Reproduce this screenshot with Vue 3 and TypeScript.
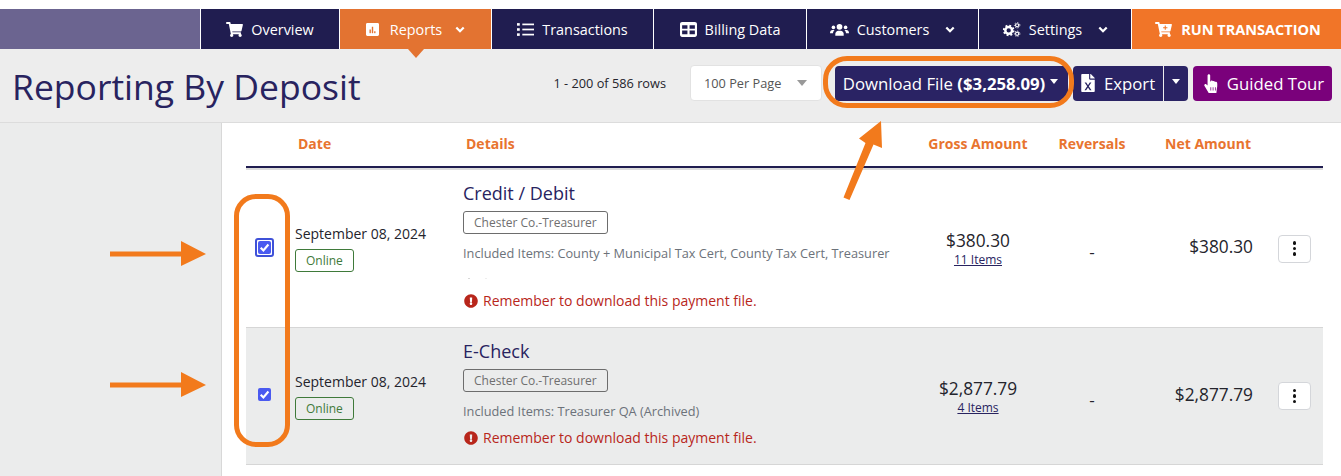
<script setup lang="ts">
interface NavItem {
  label: string
  icon: string
  width: number
  caret?: boolean
  kind?: string
}

interface PaymentRow {
  title: string
  tag: string
  included: string
  gross: string
  items: string
  net: string
  boxed: boolean
  specks: boolean
}

const navItems: NavItem[] = [
  { label: 'Overview', icon: 'cart', width: 138 },
  { label: 'Reports', icon: 'chart', width: 151, caret: true, kind: 'active' },
  { label: 'Transactions', icon: 'list', width: 161 },
  { label: 'Billing Data', icon: 'table', width: 152 },
  { label: 'Customers', icon: 'users', width: 171, caret: true },
  { label: 'Settings', icon: 'cogs', width: 152, caret: true },
  { label: 'RUN TRANSACTION', icon: 'cartplus', width: 209, kind: 'run' },
]

const rows: PaymentRow[] = [
  {
    title: 'Credit / Debit',
    tag: 'Chester Co.-Treasurer',
    included: 'Included Items: County + Municipal Tax Cert, County Tax Cert, Treasurer',
    gross: '$380.30',
    items: '11 Items',
    net: '$380.30',
    boxed: true,
    specks: true,
  },
  {
    title: 'E-Check',
    tag: 'Chester Co.-Treasurer',
    included: 'Included Items: Treasurer QA (Archived)',
    gross: '$2,877.79',
    items: '4 Items',
    net: '$2,877.79',
    boxed: false,
    specks: false,
  },
]

const cartPath =
  'M528.12 301.319l47.273-208C578.806 78.301 567.391 64 551.99 64H159.208l-9.166-44.81C147.758 8.021 137.93 0 126.529 0H24C10.745 0 0 10.745 0 24v16c0 13.255 10.745 24 24 24h69.883l70.248 343.435C147.325 417.1 136 435.222 136 456c0 30.928 25.072 56 56 56s56-25.072 56-56c0-15.674-6.447-29.835-16.824-40h209.647C430.447 426.165 424 440.326 424 456c0 30.928 25.072 56 56 56s56-25.072 56-56c0-22.172-12.888-41.332-31.579-50.405l5.517-24.276c3.413-15.018-8.002-29.319-23.403-29.319H218.117l-6.545-32h293.145c11.206 0 20.92-7.754 23.403-18.681z'
const alertPath =
  'M504 256c0 136.997-111.043 248-248 248S8 392.997 8 256C8 119.083 119.043 8 256 8s248 111.083 248 248zm-248 50c-25.405 0-46 20.595-46 46s20.595 46 46 46 46-20.595 46-46-20.595-46-46-46zm-43.673-165.346l7.418 136c.347 6.364 5.609 11.346 11.982 11.346h48.546c6.373 0 11.635-4.982 11.982-11.346l7.418-136c.375-6.874-5.098-12.654-11.982-12.654h-63.383c-6.884 0-12.356 5.78-11.981 12.654z'
</script>

<template>
  <div class="page">
    <nav class="nav">
      <div class="nav-blank"></div>
      <a
        v-for="item in navItems"
        :key="item.label"
        class="nav-item"
        :class="item.kind"
        :style="{ width: `${item.width}px` }"
      >
        <svg v-if="item.icon === 'cart'" class="nav-icon" viewBox="0 0 576 512" fill="currentColor">
          <path :d="cartPath" />
        </svg>
        <svg v-else-if="item.icon === 'cartplus'" class="nav-icon" viewBox="0 0 576 512" fill="currentColor">
          <path :d="cartPath" />
          <path d="M330 120h36v56h56v36h-56v56h-36v-56h-56v-36h56z" fill="#f17528" />
        </svg>
        <svg v-else-if="item.icon === 'chart'" class="nav-icon small" viewBox="0 0 448 512" fill="currentColor">
          <path
            fill-rule="evenodd"
            d="M48 32h352c26 0 48 22 48 48v352c0 26-22 48-48 48H48c-26 0-48-22-48-48V80c0-26 22-48 48-48zm84 224c-7 0-12 5-12 12v104c0 7 5 12 12 12h24c7 0 12-5 12-12V268c0-7-5-12-12-12zm80-96c-7 0-12 5-12 12v200c0 7 5 12 12 12h24c7 0 12-5 12-12V172c0-7-5-12-12-12zm80 160c-7 0-12 5-12 12v40c0 7 5 12 12 12h24c7 0 12-5 12-12v-40c0-7-5-12-12-12z"
          />
        </svg>
        <svg v-else-if="item.icon === 'list'" class="nav-icon" viewBox="0 0 16 14" fill="currentColor">
          <rect x="0" y="1" width="2.6" height="2.4" />
          <rect x="0" y="5.8" width="2.6" height="2.4" />
          <rect x="0" y="10.6" width="2.6" height="2.4" />
          <rect x="5" y="1.4" width="11" height="1.6" />
          <rect x="5" y="6.2" width="11" height="1.6" />
          <rect x="5" y="11" width="11" height="1.6" />
        </svg>
        <svg v-else-if="item.icon === 'table'" class="nav-icon" viewBox="0 0 16 14" fill="currentColor">
          <path
            fill-rule="evenodd"
            d="M2 0h12c1.100 0 2 .9 2 2v10c0 1.100-.9 2-2 2H2c-1.100 0-2-.9-2-2V2C0 .9.900 0 2 0zm0 3v3.400h5V3zm7 0v3.400h5V3zM2 8v3.500h5V8zm7 0v3.500h5V8z"
          />
        </svg>
        <svg v-else-if="item.icon === 'users'" class="nav-icon wide" viewBox="0 0 20 14" fill="currentColor">
          <circle cx="10" cy="4.2" r="3" />
          <path d="M5.6 13.6v-2c0-2 1.600-3.400 3-3.400h2.800c1.400 0 3 1.400 3 3.400v2z" />
          <circle cx="3.6" cy="4.8" r="1.9" />
          <circle cx="16.4" cy="4.8" r="1.9" />
          <path d="M0 10.800c0-2 1.200-3.200 2.600-3.200h2.200c-1 .8-1.600 2-1.600 3.400H0zM20 10.800c0-2-1.200-3.200-2.600-3.200h-2.200c1 .8 1.600 2 1.600 3.400H20z" />
        </svg>
        <svg v-else-if="item.icon === 'cogs'" class="nav-icon wide" viewBox="0 0 20 16" fill="none" stroke="currentColor">
          <circle cx="7" cy="9" r="3.6" stroke-width="2.6" />
          <circle cx="7" cy="9" r="5.2" stroke-width="2" stroke-dasharray="2 2.080" />
          <circle cx="16" cy="3.500" r="1.700" stroke-width="1.200" />
          <circle cx="16" cy="12.500" r="1.700" stroke-width="1.200" />
          <circle cx="16" cy="3.500" r="2.900" stroke-width="1" stroke-dasharray="1.200 1.500" />
          <circle cx="16" cy="12.500" r="2.900" stroke-width="1" stroke-dasharray="1.200 1.500" />
        </svg>
        <span>{{ item.label }}</span>
        <svg v-if="item.caret" class="chevron" viewBox="0 0 10 7" fill="none" stroke="currentColor">
          <path d="M1.300 1.500 5 5.200l3.700-3.700" stroke-width="2.200" />
        </svg>
        <i v-if="item.kind === 'active'" class="nav-pointer"></i>
      </a>
    </nav>

    <header class="toolbar">
      <h1 class="title">Reporting By Deposit</h1>
      <div class="actions">
        <span class="row-count">1 - 200 of 586 rows</span>
        <div class="per-page">
          <span>100 Per Page</span>
          <i class="select-caret"></i>
        </div>
        <button class="btn download">
          Download File&nbsp;<b>($3,258.09)</b><i class="caret"></i>
        </button>
        <div class="export-group">
          <button class="btn export">
            <svg class="xls" viewBox="0 0 384 512">
              <path
                fill="#fff"
                d="M224 0H24C11 0 0 11 0 24v464c0 13 11 24 24 24h336c13 0 24-11 24-24V160H248c-13 0-24-11-24-24zM384 122v6H256V0h6c6 0 12 3 17 7l98 98c4 5 7 11 7 17z"
              />
              <path fill="#24205f" d="M96 240h46l50 78 50-78h46l-73 110 76 114h-46l-53-82-53 82H93l76-114z" />
            </svg>
            Export
          </button>
          <button class="btn export-caret"><i class="caret"></i></button>
        </div>
        <button class="btn tour">
          <svg class="hand" viewBox="0 0 16 20" fill="#fff">
            <path
              d="M3.800 1.500C3.800.7 4.400 0 5.200 0s1.400.7 1.400 1.500v6.300l.9-.1V7c.8-.5 1.800-.2 2.100.6.800-.5 1.800-.2 2.100.7.900-.4 2-.1 2.300 1 .3 1.700.2 4.300-.3 6.200l-.5 4.500H5L.6 12.700c-.9-1.100.5-2.900 2-1.700l1.200 1z"
            />
            <path d="M7.200 14v3.500M9.700 14v3.500M12.200 14v3.500" stroke="#7a017b" stroke-width=".8" fill="none" />
          </svg>
          Guided Tour
        </button>
      </div>
    </header>

    <div class="body">
      <aside class="sidebar"></aside>
      <main class="content">
        <div class="table-head">
          <span></span>
          <span class="head-date">Date</span>
          <span class="head-details">Details</span>
          <span class="center">Gross Amount</span>
          <span class="center">Reversals</span>
          <span class="head-net">Net Amount</span>
        </div>

        <div v-for="(row, index) in rows" :key="row.title" class="table-row" :class="{ shaded: index === 1 }">
          <div class="check-cell">
            <span class="check-wrap" :class="{ boxed: row.boxed }">
              <span class="checkbox">
                <svg viewBox="0 0 12 12" fill="none" stroke="#fff">
                  <path d="M2.500 6.200 5 8.700l4.600-5.400" stroke-width="2" />
                </svg>
              </span>
            </span>
          </div>
          <div class="date-cell">
            <div class="date">September 08, 2024</div>
            <span class="badge">Online</span>
          </div>
          <div class="details-cell">
            <div class="row-title">{{ row.title }}</div>
            <span class="tag">{{ row.tag }}</span>
            <div class="included">{{ row.included }}</div>
            <div v-if="row.specks" class="specks"></div>
            <div class="reminder">
              <svg class="alert" viewBox="0 0 512 512" fill="#b8261b"><path :d="alertPath" /></svg>
              Remember to download this payment file.
            </div>
          </div>
          <div class="gross-cell">
            <div class="amount">{{ row.gross }}</div>
            <a class="items-link">{{ row.items }}</a>
          </div>
          <div class="reversal-cell">-</div>
          <div class="net-cell">{{ row.net }}</div>
          <div class="menu-cell">
            <button class="menu-btn" aria-label="More">
              <i></i><i></i><i></i>
            </button>
          </div>
        </div>
      </main>
    </div>

    <!-- Hand drawn annotations sitting on top of the screenshot -->
    <div class="ring ring-download"></div>
    <div class="ring ring-checks"></div>
    <svg class="arrows" viewBox="0 0 1341 476" fill="#f27a1c" stroke="none">
      <path d="M110 251.500h71V241l25 13-25 12v-9.500h-71z" />
      <path d="M110 382.500h71V372l25 13-25 12v-9.500h-71z" />
      <path d="M843.500 197.500 865.500 143 859 138.500 881 121 882 148 873.500 144.500 849.500 200z" />
    </svg>
  </div>
</template>

<style scoped>
.page {
  position: relative;
  width: 1341px;
  height: 476px;
  overflow: hidden;
  padding-top: 9px;
  box-sizing: border-box;
  background: #fff;
  font-family: 'Open Sans', 'Liberation Sans', sans-serif;
  color: #24242c;
}

.nav {
  display: flex;
  gap: 1px;
  height: 40px;
}

.nav-blank {
  flex: 1;
  background: #6b6490;
}

.nav-item {
  position: relative;
  flex: none;
  display: flex;
  align-items: center;
  justify-content: center;
  gap: 8px;
  background: #201d50;
  color: #fff;
  font-size: 14.400px;
}

.nav-item.active {
  gap: 11px;
  background: #e37331;
}

.nav-item.active .chevron {
  margin-left: 2px;
}

.nav-item.run {
  gap: 9px;
  padding-left: 3px;
  box-sizing: border-box;
  background: #f17528;
  font-size: 14.500px;
  font-weight: 700;
}

.nav-icon {
  width: 17px;
  height: 15px;
}

.nav-icon.small {
  width: 13px;
}

.nav-icon.wide {
  width: 19px;
}

.chevron {
  width: 10px;
  height: 7px;
  margin-left: 8px;
}

.nav-pointer {
  position: absolute;
  left: 50%;
  bottom: -9px;
  margin-left: -8px;
  border-left: 8px solid transparent;
  border-right: 8px solid transparent;
  border-top: 9px solid #e37331;
  z-index: 2;
}

.toolbar {
  display: flex;
  align-items: center;
  justify-content: space-between;
  height: 74px;
  padding: 0 9px 0 12px;
  background: #ededed;
  border-bottom: 1px solid #dcdcdc;
  box-sizing: border-box;
}

.title {
  margin: 0;
  font-size: 35.500px;
  font-weight: 500;
  color: #28235f;
  line-height: 76px;
}

.actions {
  display: flex;
  align-items: center;
  padding-bottom: 5px;
}

.row-count {
  margin-right: 24px;
  font-size: 12.750px;
}

.per-page {
  display: flex;
  align-items: center;
  justify-content: space-between;
  width: 132px;
  height: 36px;
  margin-right: 13px;
  padding: 0 14px 0 13px;
  box-sizing: border-box;
  background: #fff;
  border: 1px solid #e2e2e2;
  border-radius: 4px;
  color: #555;
  font-size: 12.750px;
}

.select-caret {
  border-left: 5px solid transparent;
  border-right: 5px solid transparent;
  border-top: 6px solid #999;
}

.btn {
  display: flex;
  align-items: center;
  justify-content: center;
  height: 35px;
  padding: 0;
  border: 0;
  border-radius: 4px;
  font-family: inherit;
  font-size: 16.750px;
  color: #fff;
  background: #2a2364;
}

.btn b {
  font-weight: 700;
}

.download {
  width: 233px;
  margin-right: 5px;
  padding-right: 2px;
}

.caret {
  margin-left: 5px;
  margin-bottom: 4px;
  border-left: 4.500px solid transparent;
  border-right: 4.500px solid transparent;
  border-top: 5px solid #fff;
}

.export-group {
  display: flex;
  gap: 1px;
  margin-right: 5px;
}

.export {
  width: 90px;
  gap: 9px;
  border-radius: 4px 0 0 4px;
}

.xls {
  width: 14px;
  height: 18px;
}

.export-caret {
  width: 24px;
  border-radius: 0 4px 4px 0;
}

.export-caret .caret {
  margin-left: 0;
}

.tour {
  width: 139px;
  gap: 8px;
  padding-left: 3px;
  background: #7a017b;
}

.hand {
  width: 15px;
  height: 19px;
}

.body {
  display: flex;
  height: 353px;
}

.sidebar {
  flex: none;
  width: 221px;
  background: #ebecec;
  border-right: 1px solid #d8d8d8;
}

.content {
  flex: none;
  width: 1077px;
  margin-left: 24px;
}

.table-head,
.table-row {
  display: grid;
  grid-template-columns: 49px 167px 442px 148px 80px 121px 70px;
}

.table-head {
  align-items: center;
  height: 41px;
  padding-bottom: 2px;
  border-bottom: 2px solid #201d50;
  box-shadow: 0 2px 0 #dcdcdc;
  color: #e8742f;
  font-size: 14px;
  font-weight: 700;
}

.head-date {
  padding-left: 3px;
}

.head-details {
  padding-left: 4px;
}

.center {
  text-align: center;
}

.head-net {
  padding-right: 2px;
  text-align: right;
}

.table-row {
  align-items: center;
  box-sizing: border-box;
  margin-top: 2px;
}

.table-row.shaded {
  margin-top: 0;
  background: #ebecec;
  border-top: 1px solid #d6d6d6;
  border-bottom: 1px solid #d6d6d6;
}

.check-cell {
  display: flex;
  justify-content: center;
  margin-left: -12px;
  padding-bottom: 3px;
}

.check-wrap {
  display: flex;
  padding: 2px;
}

.check-wrap.boxed {
  border: 2px solid #3f51d8;
  border-radius: 3px;
  padding: 1px;
  background: #fff;
}

.checkbox {
  display: flex;
  width: 13px;
  height: 13px;
  background: #4a5af0;
  border-radius: 2px;
}

.date {
  font-size: 14px;
  line-height: 18px;
}

.badge {
  display: block;
  width: fit-content;
  margin-top: 6px;
  padding: 0 10px;
  border: 1px solid #3f7a3a;
  border-radius: 3px;
  color: #3f7a3a;
  font-size: 12px;
  line-height: 21px;
}

.details-cell {
  padding: 11px 0 17px 1px;
  color: #6c727a;
}

.row-title {
  font-size: 18px;
  line-height: 24px;
  color: #28235f;
}

.tag {
  display: block;
  width: fit-content;
  margin-top: 6px;
  padding: 0 10px;
  border: 1px solid #6d6d6d;
  border-radius: 3px;
  font-size: 12px;
  line-height: 21px;
  color: #6f6f6f;
}

.included {
  margin-top: 10px;
  font-size: 12.750px;
  line-height: 18px;
}

.specks {
  position: relative;
  height: 21px;
}

.specks::after {
  content: '';
  position: absolute;
  left: 5px;
  top: 16px;
  width: 2px;
  height: 1px;
  background: #d8d8d8;
  box-shadow: 17px 0 0 #eee;
}

.reminder {
  display: flex;
  align-items: center;
  gap: 5px;
  margin-top: 9px;
  font-size: 14px;
  line-height: 18px;
  color: #b8261b;
}

.alert {
  width: 14px;
  height: 14px;
  margin-left: 1px;
}

.gross-cell {
  text-align: center;
}

.amount {
  font-size: 17.300px;
  line-height: 21px;
}

.items-link {
  display: block;
  margin-top: 1px;
  font-size: 12px;
  line-height: 15px;
  color: #28235f;
  text-decoration: underline;
}

.reversal-cell {
  text-align: center;
  font-size: 17px;
  padding-top: 6px;
}

.net-cell {
  text-align: right;
  font-size: 17.300px;
  padding-bottom: 4px;
}

.menu-cell {
  padding-left: 25px;
}

.menu-btn {
  display: flex;
  flex-direction: column;
  align-items: center;
  justify-content: center;
  gap: 2px;
  width: 33px;
  height: 28px;
  padding: 0;
  background: #fff;
  border: 1px solid #d4d6da;
  border-radius: 4px;
}

.menu-btn i {
  width: 3.500px;
  height: 3.500px;
  border-radius: 50%;
  background: #111;
}

/* annotations */
.ring {
  position: absolute;
  border: 5px solid #f27a1c;
  box-sizing: border-box;
  z-index: 3;
}

.ring-download {
  left: 823px;
  top: 56px;
  width: 251px;
  height: 52px;
  border-radius: 24px;
}

.ring-checks {
  left: 234px;
  top: 194px;
  width: 56px;
  height: 253px;
  border-radius: 22px;
}

.arrows {
  position: absolute;
  inset: 0;
  width: 1341px;
  height: 476px;
  z-index: 3;
  pointer-events: none;
}
</style>
